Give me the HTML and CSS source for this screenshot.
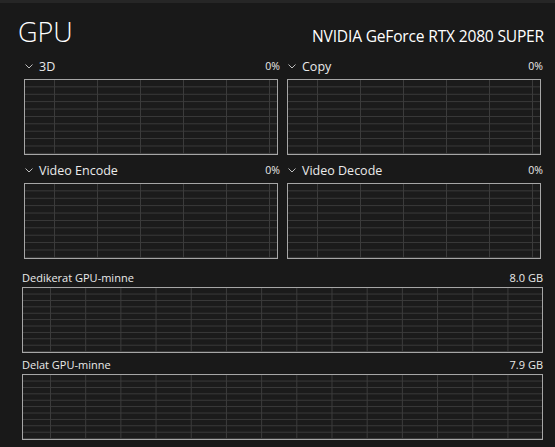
FILE: index.html
```html
<!DOCTYPE html>
<html lang="nb">
<head>
  <meta charset="UTF-8" />
  <meta name="viewport" content="width=device-width, initial-scale=1.0"/>
  <title>GPU</title>
  <link rel="stylesheet" href="styles.css">
</head>
<body>

  <div class="topline"></div>

  <header>
    <h1>GPU</h1>
    <div class="model">NVIDIA GeForce RTX 2080 SUPER</div>
  </header>

  <div class="engines">
    <div class="panel">
      <div class="label">
        <span class="name"><svg class="chev" width="8" height="5" viewBox="0 0 8 5"><polyline points="0.5,0.5 4,4 7.5,0.5"/></svg>3D</span>
        <span class="value">0%</span>
      </div>
      <div class="graph small"></div>
    </div>
    <div class="panel">
      <div class="label">
        <span class="name"><svg class="chev" width="8" height="5" viewBox="0 0 8 5"><polyline points="0.5,0.5 4,4 7.5,0.5"/></svg>Copy</span>
        <span class="value">0%</span>
      </div>
      <div class="graph small"></div>
    </div>
    <div class="panel">
      <div class="label">
        <span class="name"><svg class="chev" width="8" height="5" viewBox="0 0 8 5"><polyline points="0.5,0.5 4,4 7.5,0.5"/></svg>Video Encode</span>
        <span class="value">0%</span>
      </div>
      <div class="graph small"></div>
    </div>
    <div class="panel">
      <div class="label">
        <span class="name"><svg class="chev" width="8" height="5" viewBox="0 0 8 5"><polyline points="0.5,0.5 4,4 7.5,0.5"/></svg>Video Decode</span>
        <span class="value">0%</span>
      </div>
      <div class="graph small"></div>
    </div>
  </div>

  <div class="memory">
    <div class="mem-label">
      <span>Dedikerat GPU-minne</span>
      <span>8.0 GB</span>
    </div>
    <div class="graph wide"></div>

    <div class="mem-label">
      <span>Delat GPU-minne</span>
      <span>7.9 GB</span>
    </div>
    <div class="graph wide"></div>
  </div>

</body>
</html>
```

FILE: styles.css
```css
* { box-sizing: border-box; }
body {
  margin: 0;
  font-family: 'Open Sans', 'Noto Sans', sans-serif;
  background: #191919;
  color: #fff;
  overflow: hidden;
}

.topline {
  height: 3px;
  background: #262626;
}

header {
  display: flex;
  justify-content: space-between;
  align-items: baseline;
  padding: 6px 11px 0 18px;
  height: 53px;
}

header h1 {
  margin: 0;
  font-weight: 300;
  font-size: 27px;
  line-height: 46px;
}

.model {
  font-size: 15.6px;
  letter-spacing: -0.2px;
  font-weight: 400;
}

.engines {
  display: grid;
  grid-template-columns: 1fr 1fr;
  column-gap: 7px;
  row-gap: 5px;
  padding: 0 12px 0 24px;
}

.label {
  display: flex;
  justify-content: space-between;
  align-items: center;
  height: 20px;
  margin-bottom: 3px;
  color: #eaeaea;
}

.label .name {
  display: flex;
  align-items: center;
  font-size: 12.5px;
}

.chev {
  margin: 0 6px 0 1px;
  fill: none;
  stroke: #bdbdbd;
  stroke-width: 1;
}

.label .value {
  font-size: 10.5px;
}

.graph {
  border: 1px solid #a6a6a6;
  background-color: #1b1b1b;
  background-image:
    linear-gradient(to right, #3b3b3b 1px, transparent 1px),
    linear-gradient(to bottom, #3b3b3b 1px, transparent 1px);
}

.graph.small {
  height: 76px;
  margin-right: 2px;
  background-size: 43px 100%, 100% 7.4px;
  background-position: 29px 0, 0 6.4px;
}

.memory {
  padding: 10px 12px 0 22px;
}

.mem-label {
  display: flex;
  justify-content: space-between;
  align-items: center;
  height: 16px;
  margin-bottom: 2px;
  font-size: 11px;
  color: #eaeaea;
}

.graph.wide {
  height: 66px;
  margin-bottom: 3px;
  background-size: 35.2px 100%, 100% 6.4px;
  background-position: 27px 0, 0 5.6px;
}
```
